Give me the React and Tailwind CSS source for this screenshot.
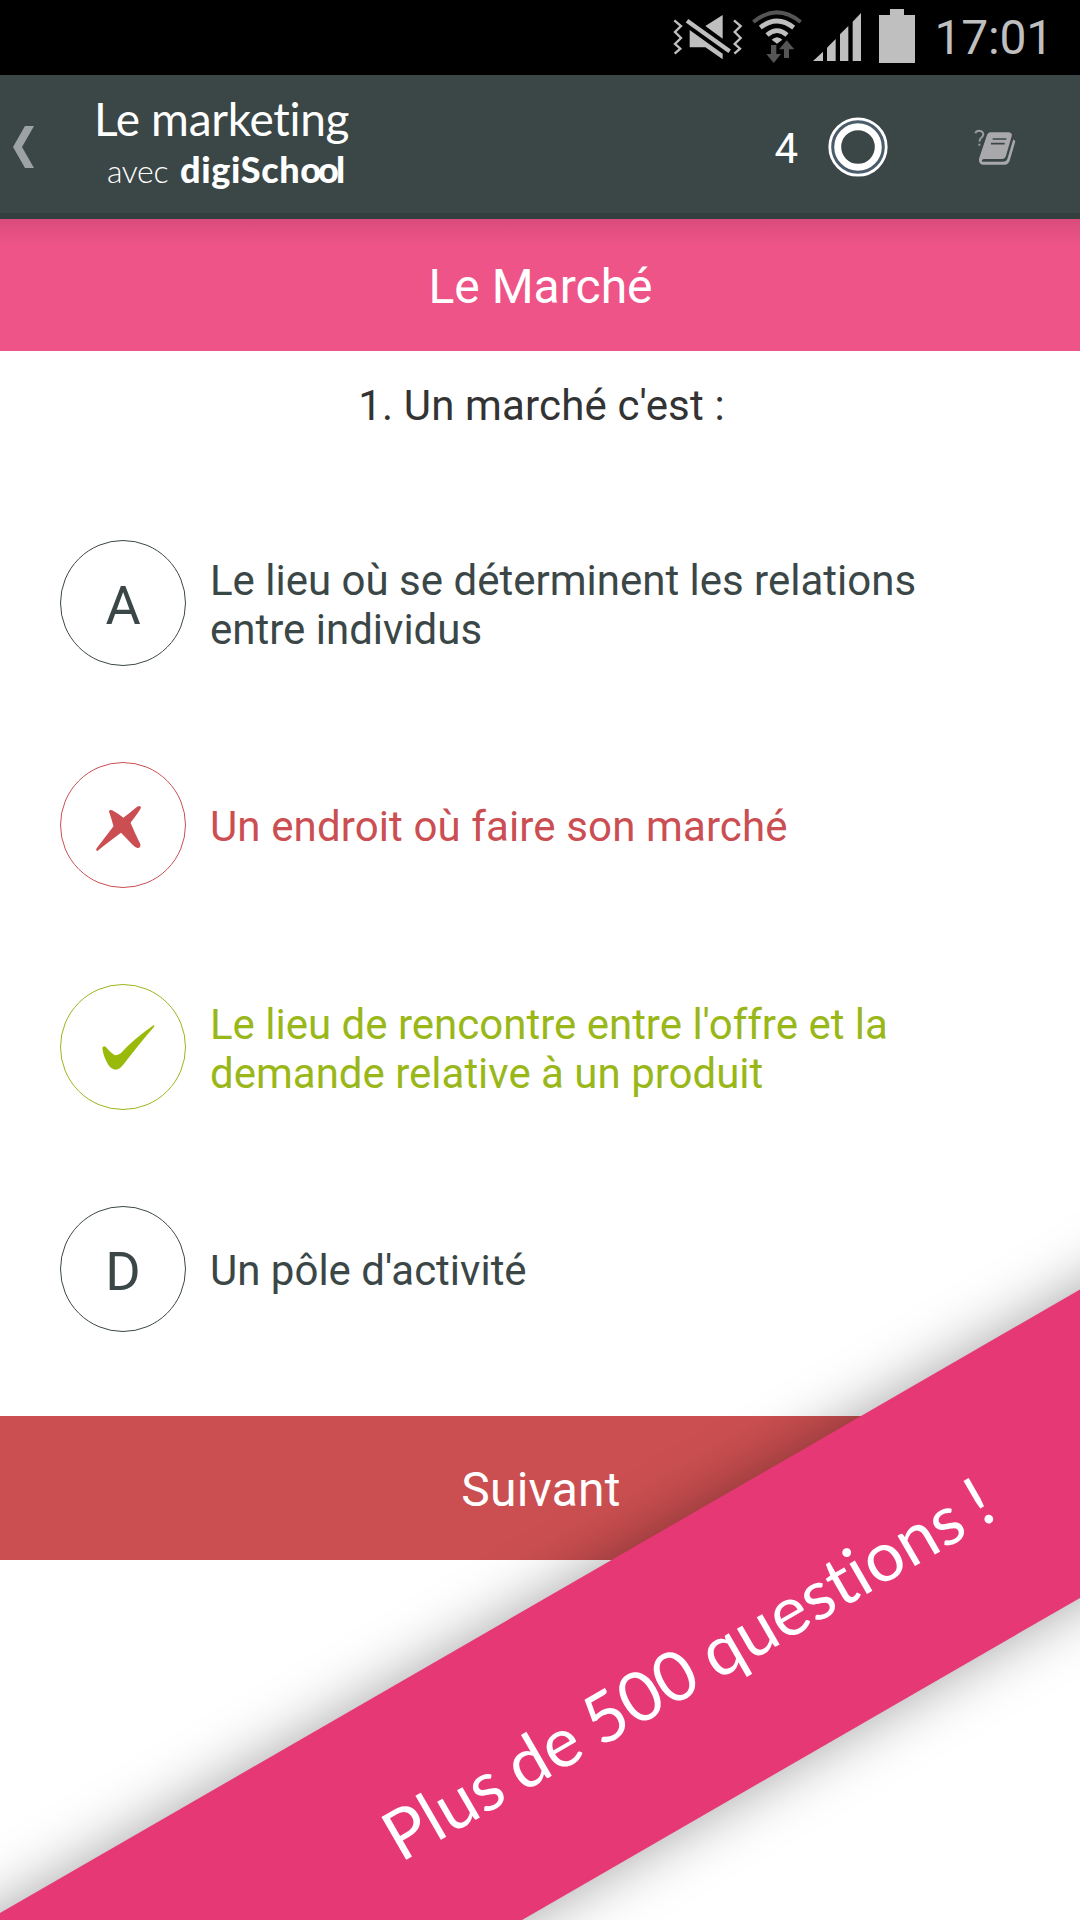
import clsx from 'clsx';

const reponses = [
  { id: 'A', texte: ['Le lieu où se déterminent les relations', 'entre individus'], etat: 'neutre' },
  { id: 'B', texte: ['Un endroit où faire son marché'], etat: 'faux' },
  { id: 'C', texte: ["Le lieu de rencontre entre l'offre et la", 'demande relative à un produit'], etat: 'juste' },
  { id: 'D', texte: ["Un pôle d'activité"], etat: 'neutre' },
];

function IconeMuet() {
  return (
    <svg className="h-[75px] w-[70px]" viewBox="40 0 210 225" fill="#bfbfbf">
      <path d="M137 78L189 45V116Z" />
      <path d="M90 90L189 161V178L137 142H90Z" />
      <path d="M82 62L210 154" stroke="#bfbfbf" strokeWidth="13" />
      <path
        d="M44 61L64 78L46 96L64 114L46 132L62 146L45 161M223 61L243 78L225 96L243 114L225 132L241 146L224 161"
        fill="none"
        stroke="#bfbfbf"
        strokeWidth="7"
      />
    </svg>
  );
}

function IconeWifi() {
  return (
    <svg className="ml-[9px] h-[75px] w-[50px]" viewBox="276 0 150 225" fill="none">
      <path d="M280 66Q351 8 422 66" stroke="#555" strokeWidth="12" />
      <path d="M301 83Q351 43 401 83" stroke="#bfbfbf" strokeWidth="14" />
      <path d="M321 105Q351 79 381 105" stroke="#bfbfbf" strokeWidth="14" />
      <path d="M335 119Q351 104 367 119L351 131Z" fill="#bfbfbf" />
      <path d="M333 135H349V162H363L341 189L319 162H333Z" fill="#555" />
      <path d="M380 121L403 148H387V174H372V148H357Z" fill="#555" />
    </svg>
  );
}

function IconeReseau() {
  return (
    <svg className="ml-[11px] h-[75px] w-12" viewBox="459 0 144 225" fill="#bfbfbf">
      <path d="M459 183L489 155V183Z" />
      <path d="M501 143L527 117V183H501Z" />
      <path d="M540 103L565 78V183H540Z" />
      <path d="M578 65L603 39V183H578Z" />
    </svg>
  );
}

function IconeBatterie() {
  return (
    <svg className="ml-[18px] h-[75px] w-9" viewBox="0 0 36 75" fill="#bfbfbf">
      <path d="M11 9H25V15H36V63H0V15H11Z" />
    </svg>
  );
}

function IconeCours() {
  return (
    <svg className="ml-[86px] h-9 w-[42px]" viewBox="702 112 126 108" fill="none">
      <path d="M706 125Q708 117 718 117Q730 118 730 129Q729 135 723 139Q718 143 719 150M718 156V162" stroke="#999b9c" strokeWidth="6" />
      <path
        d="M752 122H806Q818 124 815 134L797 195Q794 202 786 202H731Q723 205 727 210H789Q799 210 802 202L820 143L826 149L809 207Q804 219 794 219H728Q715 216 717 201L740 133Q743 123 752 122Z"
        fill="#a9a9ab"
      />
      <path d="M758 142H799M753 156H794" stroke="#3b4747" strokeWidth="5" />
    </svg>
  );
}

function IconeFaux() {
  return (
    <svg className="size-[126px]" viewBox="60 36 378 378" fill="#cb4f52">
      <path d="M206 183Q208 177 216 180Q235 190 250 203Q268 189 292 169Q302 164 304 172Q300 183 272 218Q284 247 302 284Q303 296 293 295Q286 294 276 283L243 249Q212 272 171 304Q163 303 171 293Q192 266 220 229Q214 206 206 183Z" />
    </svg>
  );
}

function IconeJuste() {
  return (
    <svg className="size-[126px]" viewBox="60 42 378 378" fill="#9aba0a">
      <path d="M186 234Q188 226 196 230Q211 248 224 256Q234 256 243 249Q283 206 342 165Q346 164 344 169Q305 213 249 286Q238 300 227 300Q213 299 204 285Q188 258 186 234Z" />
    </svg>
  );
}

function Reponse({ id, texte, etat }) {
  return (
    <li
      className={clsx(
        'flex h-[222px] items-center gap-6',
        etat === 'neutre' && 'text-[#3b4747]',
        etat === 'faux' && 'tracking-[0.12px] text-[#cb4f52]',
        etat === 'juste' && 'text-[#9ab71a]'
      )}
    >
      <div className="flex size-[126px] shrink-0 items-center justify-center rounded-full border border-current text-[54px]">
        {etat === 'neutre' && <span className="relative top-[2px]">{id}</span>}
        {etat === 'faux' && <IconeFaux />}
        {etat === 'juste' && <IconeJuste />}
      </div>
      <p className="pt-[3px] text-[42px] leading-[49px] whitespace-nowrap">
        {texte.map((ligne) => (
          <span key={ligne} className="block">{ligne}</span>
        ))}
      </p>
    </li>
  );
}

export default function App() {
  return (
    <div className="relative flex h-[1920px] w-[1080px] flex-col overflow-hidden bg-white font-['Roboto',sans-serif]">
      {/* Barre d'état */}
      <div className="flex h-[75px] shrink-0 items-center justify-end bg-black pr-[27px]">
        <IconeMuet />
        <IconeWifi />
        <IconeReseau />
        <IconeBatterie />
        <span className="ml-[19px] text-[48px] leading-[75px] tracking-[-0.2px] text-[#bfbfbf]">17:01</span>
      </div>

      {/* En-tête */}
      <header className="flex h-36 shrink-0 items-center border-b-[6px] border-[#333e3e] bg-[#3b4747] pt-[6px] text-white">
        <svg className="ml-[13px] h-[42px] w-[21px]" viewBox="0 0 21 42" fill="#9da3a3">
          <path d="M12 0H21L9 21L21 42H12L0 21Z" />
        </svg>
        <div className="ml-[59px] flex w-[260px] flex-col pb-[6px] font-['Lato',sans-serif] [font-variant-ligatures:none]">
          <span className="pl-px text-[46px] leading-[52px] tracking-[-0.3px] whitespace-nowrap">Le marketing</span>
          <div className="flex items-baseline pl-[14px] leading-[49px]">
            <span className="text-[32px] font-light tracking-[-0.4px]">avec</span>
            <span className="ml-3 text-[36px] font-black tracking-[0.6px]">
              digiSch<span className="tracking-[-3px]">oo</span>l
            </span>
          </div>
        </div>
        <span className="ml-auto pt-[2px] text-[42px]">4</span>
        <svg className="ml-[30px] size-[60px]" viewBox="0 0 60 60" fill="none">
          <circle cx="30" cy="30" r="26" stroke="#4a5d6d" strokeWidth="4" />
          <circle cx="30" cy="30" r="28.2" stroke="#fff" strokeWidth="2.8" />
          <circle cx="30" cy="30" r="20.3" stroke="#fff" strokeWidth="7" />
        </svg>
        <IconeCours />
        <div className="w-16" />
      </header>

      <div className="flex h-[132px] shrink-0 items-center justify-center bg-[#ee5487] bg-linear-to-b from-[#d94c7b] to-[#ee5487] to-20% text-[48px] text-white">
        <h1 className="pt-1 pl-px">Le Marché</h1>
      </div>

      {/* Question */}
      <main className="h-[1065px] shrink-0">
        <h2 className="h-[141px] pt-[30px] pl-[3px] text-center text-[42px] leading-[49px] tracking-[0.15px] text-[#333]">
          1. Un marché c'est :
        </h2>
        <ul className="pl-[60px]">
          {reponses.map((r) => (
            <Reponse key={r.id} {...r} />
          ))}
        </ul>
      </main>

      <button className="h-36 shrink-0 bg-[#cb4f50] pt-1 pl-[2px] text-[48px] tracking-[0.2px] text-white">Suivant</button>

      {/* Bandeau promotionnel */}
      <div className="absolute top-[1622px] left-[-260px] flex h-[267px] w-[1600px] origin-center -rotate-30 items-center justify-center bg-[#e73876] pb-[6px] pl-[342px] shadow-[0_0_60px_rgba(0,0,0,0.36)]">
        <span className="font-['Lato',sans-serif] text-[69px] leading-none [word-spacing:-3px] whitespace-nowrap text-white [font-variant-ligatures:none]">
          Plus de 500 questions !
        </span>
      </div>
    </div>
  );
}
